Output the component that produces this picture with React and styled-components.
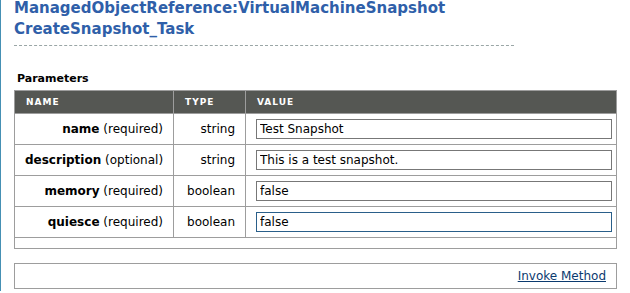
import React from "react";
import styled, { createGlobalStyle } from "styled-components";

const Global = createGlobalStyle`
  html, body {
    margin: 0;
    padding: 0;
    background: #fff;
  }
  body {
    font-family: "DejaVu Sans", Verdana, sans-serif;
  }
`;

const Page = styled.div`
  border-left: 1px solid #4590b4;
  min-height: 293px;
  box-sizing: border-box;
  padding: 0 13px 0 13px;
  width: 630px;
`;

const Title = styled.h1`
  margin: -2px 0 0 0;
  padding: 0 0 5px 0;
  width: 500px;
  font-size: 15px;
  line-height: 21px;
  font-weight: bold;
  color: #2f5fa9;
  border-bottom: 1px dashed #9aa6a6;
`;

const Section = styled.h2`
  margin: 26px 0 5px 3px;
  font-size: 11px;
  font-weight: bold;
  color: #000;
`;

const Table = styled.table`
  width: 603px;
  table-layout: fixed;
  border-collapse: collapse;
  border: 1px solid #9d9d9d;
  font-size: 12px;
`;

const Head = styled.th`
  box-sizing: border-box;
  background: #555753;
  color: #fff;
  font-size: 9px;
  letter-spacing: 1px;
  font-weight: bold;
  text-align: left;
  height: 23px;
  padding: 0 11px;
  border: 1px solid #9d9d9d;
  width: ${(p) => p.$w || "auto"};
`;

const Cell = styled.td`
  border: 1px solid #9d9d9d;
  height: 30px;
  padding: 0 10px;
  text-align: ${(p) => p.$align || "left"};
  color: #000;
  white-space: nowrap;
`;

const EmptyRow = styled.td`
  border: 1px solid #9d9d9d;
  height: 10px;
  padding: 0;
`;

const Note = styled.span`
  font-weight: normal;
`;

const Input = styled.input`
  box-sizing: border-box;
  width: 356px;
  height: 20px;
  margin: 0;
  padding: 0 3px;
  font-family: "DejaVu Sans", Verdana, sans-serif;
  font-size: 12px;
  color: #000;
  border: 1px solid ${(p) => (p.$focus ? "#2a5f8a" : "#777")};
  outline: none;
  background: #fff;
`;

const Footer = styled.div`
  margin-top: 14px;
  width: 603px;
  box-sizing: border-box;
  height: 26px;
  border: 1px solid #9d9d9d;
  display: flex;
  align-items: center;
  justify-content: flex-end;
  padding-right: 10px;
`;

const InvokeLink = styled.a`
  color: #0b3a6f;
  font-size: 12px;
  text-decoration: underline;
  cursor: pointer;
`;

const params = [
  { name: "name", req: "required", type: "string", value: "Test Snapshot" },
  { name: "description", req: "optional", type: "string", value: "This is a test snapshot." },
  { name: "memory", req: "required", type: "boolean", value: "false" },
  { name: "quiesce", req: "required", type: "boolean", value: "false", focus: true },
];

export default function App() {
  return (
    <Page>
      <Global />
      <Title>
        ManagedObjectReference:VirtualMachineSnapshot
        <br />
        CreateSnapshot_Task
      </Title>
      <Section>Parameters</Section>
      <Table>
        <thead>
          <tr>
            <Head $w="159px">NAME</Head>
            <Head $w="72px">TYPE</Head>
            <Head>VALUE</Head>
          </tr>
        </thead>
        <tbody>
          {params.map((p) => (
            <tr key={p.name}>
              <Cell $align="right">
                <b>{p.name}</b> <Note>({p.req})</Note>
              </Cell>
              <Cell $align="right">{p.type}</Cell>
              <Cell>
                <Input defaultValue={p.value} $focus={p.focus} readOnly />
              </Cell>
            </tr>
          ))}
          <tr>
            <EmptyRow colSpan={3} />
          </tr>
        </tbody>
      </Table>
      <Footer>
        <InvokeLink>Invoke Method</InvokeLink>
      </Footer>
    </Page>
  );
}
